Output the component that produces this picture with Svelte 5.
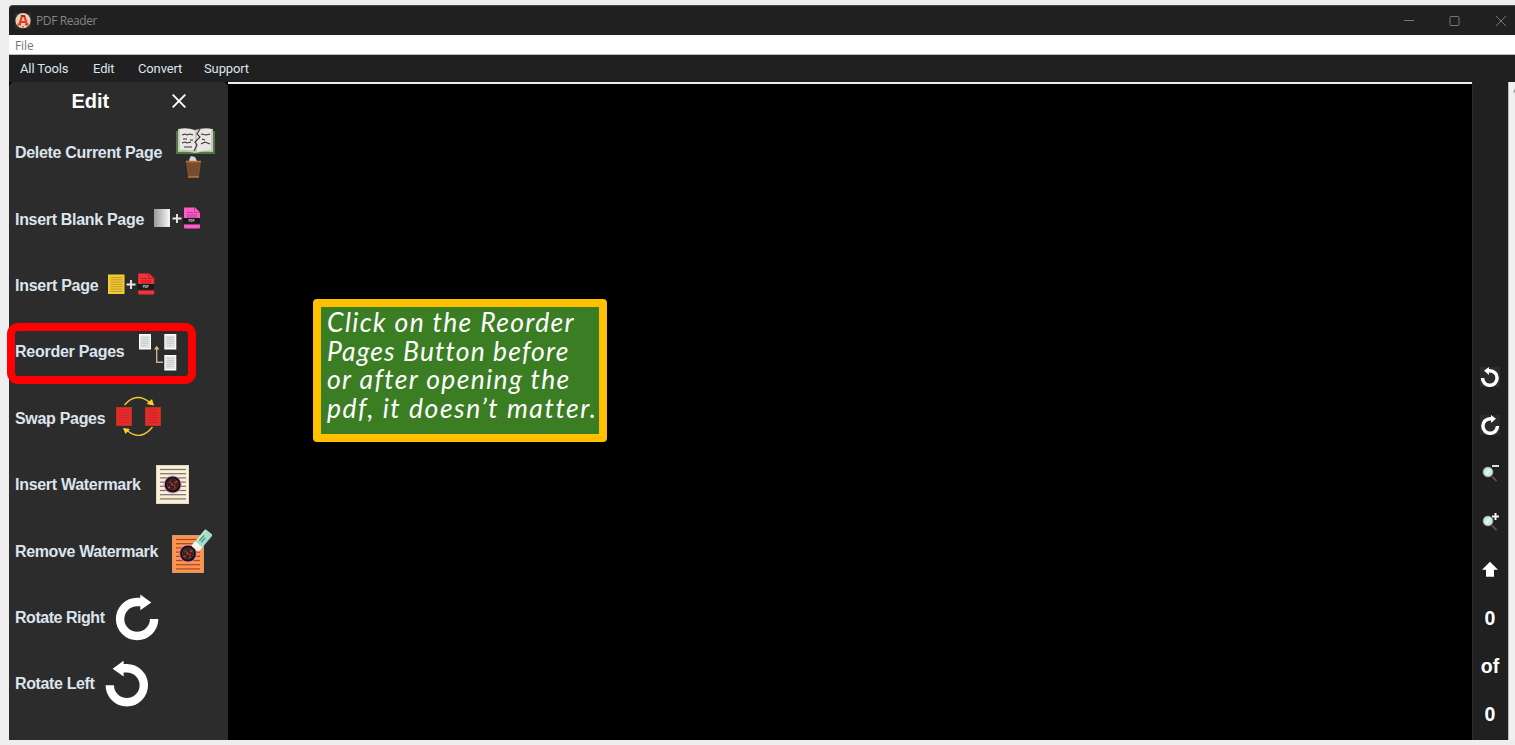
<script>
  const menus = [
    { name: 'All Tools', width: 73 },
    { name: 'Edit', width: 45 },
    { name: 'Convert', width: 66 },
    { name: 'Support', width: 60 }
  ];
  const tools = [
    { name: 'Delete Current Page', icon: 'delete', start: 155, width: 147 },
    { name: 'Insert Blank Page', icon: 'blank', start: 137, width: 129 },
    { name: 'Insert Page', icon: 'insert', start: 91, width: 83.3 },
    { name: 'Reorder Pages', icon: 'reorder', start: 121, width: 109.5 },
    { name: 'Swap Pages', icon: 'swap', start: 98, width: 90.3 },
    { name: 'Insert Watermark', icon: 'watermark', start: 135, width: 125.5 },
    { name: 'Remove Watermark', icon: 'erase', start: 150, width: 143 },
    { name: 'Rotate Right', icon: 'right', start: 94, width: 89.5 },
    { name: 'Rotate Left', icon: 'left', start: 84, width: 79.5 }
  ];
  const note = ['Click on the Reorder', 'Pages Button before', 'or after opening the', 'pdf, it doesn’t matter.'];
  const ruled = [0, 1, 2, 3, 4, 5, 6, 7];
  const widths = [248, 241, 243, 269];

  // Spaces the letters so that the text takes its set width.
  function fit(node, width) {
    const natural = node.getBoundingClientRect().width;
    node.style.letterSpacing = (width - natural) / node.textContent.length + 'px';
  }
</script>

{#snippet pdf(color, dark)}
  <path d="M2 0h11l5 5v6H2z" fill={color} />
  <path d="M12.5 0v5H18" fill={color} stroke={dark} stroke-width="1" />
  <path d="M5 5h6M5 7.5h10M5 9.5h10" stroke={dark} stroke-width="1" />
  <rect x="1" y="10.5" width="17" height="5.5" rx="1" fill="#1c1a1c" />
  <text x="9.5" y="14.4" text-anchor="middle" font-size="3" font-weight="700" fill="#ddd">PDF</text>
  <path d="M2 17h16v3q0 1-1 1H3q-1 0-1-1z" fill={color} />
{/snippet}

{#snippet sheet(x, y)}
  <g transform="translate({x} {y})">
    <rect width="12" height="15.5" fill="#fff" />
    <rect x="1" y="1.5" width="10" height="12.5" fill="#e2e2e2" />
    <path d="M3 3.5h6M2.5 5.5h7M2.5 7.5h7M2.5 9.5h7M2.5 11.5h5" stroke="#ccc" stroke-width="1" />
  </g>
{/snippet}

{#snippet seal(x, y)}
  <g transform="translate({x} {y})">
    <circle r="9.2" fill="#e874d2" opacity=".65" />
    <circle r="8" fill="#171013" />
    <circle r="5.6" fill="#38201f" stroke="#4e3535" stroke-width="1" />
    <path d="M-4.5 3.5l2-1M-1 1l.6-2.5M2-1.5l2.5-2M1 1.5l1.5-1" stroke="#d6392e" stroke-width="1.5" />
    <path d="M-3.5-1.5l2-1.5M1 4l2-1" stroke="#75666a" stroke-width="1" />
  </g>
{/snippet}

{#snippet lens()}
  <path d="M10 11l7 7.5" stroke="#38251e" stroke-width="2.4" />
  <path d="M12 13.5l4.5 4.5" stroke="#765039" stroke-width="1.7" />
  <circle cx="8" cy="9" r="4.8" fill="#cce8e5" stroke="#9db5b3" stroke-width="1" />
  <path d="M6 11.5l4-5" stroke="#effafa" stroke-width="1.6" />
{/snippet}

<div class="desktop">
  <div class="window">
    <header class="titlebar">
      <svg class="logo" width="16" height="16" viewBox="0 0 16 16">
        <rect width="16" height="16" fill="#302d2b" />
        <circle cx="8" cy="7.7" r="7.6" fill="#e4d3b4" />
        <path d="M2.5 11.5H6M10 11.5h3.5M4.5 11.5L7 3h2.3L12 11.5M5.5 9h5" fill="none" stroke="#ec3a20" stroke-width="2.2" />
        <path d="M6 2.5l4 1" stroke="#5b2b22" stroke-width="1.2" />
        <circle cx="8" cy="13.7" r="1" fill="#e4573c" />
      </svg>
      <span class="title">PDF Reader</span>
      <div class="controls">
        <svg width="106" height="30" viewBox="1400 5 106 30" fill="none" stroke="#777" stroke-width="1">
          <path d="M1404 19.5h10" />
          <rect x="1450" y="15.5" width="9" height="9" rx="1" />
          <path d="M1496 15l10 10M1506 15l-10 10" />
        </svg>
      </div>
    </header>
    <div class="filebar">File</div>
    <nav>
      {#each menus as m}
        <span style="width: {m.width}px">{m.name}</span>
      {/each}
    </nav>
    <div class="body">
      <aside>
        <div class="head">
          <h1>Edit</h1>
          <svg width="14" height="14" viewBox="0 0 14 14"><path d="M.7.7l12.6 12.6M13.3.7L.7 13.3" stroke="#fff" stroke-width="1.9" /></svg>
        </div>
        {#each tools as t}
          <div class="tool">
            <span class="label" style="width: {t.start}px"><span use:fit={t.width}>{t.name}</span></span>
            {#if t.icon === 'delete'}
              <svg width="48" height="66" viewBox="170 120 48 66">
                <path d="M176 131h39v23h-39z" fill="#4d7c39" />
                <path d="M178 129q10-2 17 1 8-3 18-1v23q-10-1-18 1-8-2-17-1z" fill="#c9c7c5" />
                <path d="M180 129q10-1 15 2v20q-8-2-15-1zM197 131q7-3 14-2v21q-8 0-14 2z" fill="#e9e7e4" />
                <path d="M200 129l-3 5 3 3-5 5 2 3-3 6M182 135l3-1 2 1 3-1 3 1M183 139h4M190 140h3M182 143l3-1 2 1 4-1M184 147h8M201 134l5 1 4-1M202 139l3 1M201 144l4-2 5 2" fill="none" stroke="#37302d" stroke-width="1.1" />
                <path d="M189 160l2-4 4 1 2 4-3 3-4-1z" fill="#d4d5d8" />
                <path d="M186 161h15l-2 16h-11z" fill="#7c502f" />
                <path d="M190 164l1 11M193.5 164v11M197 164l-1 11" stroke="#6b4529" stroke-width="1" />
                <path d="M186 161.5h15M188 177h11" stroke="#b97538" stroke-width="1.4" />
              </svg>
            {:else if t.icon === 'blank'}
              <svg width="54" height="66" viewBox="152 187 54 66">
                <defs><linearGradient id="paper"><stop stop-color="#999" /><stop offset="1" stop-color="#f8f8f8" /></linearGradient></defs>
                <rect x="154" y="209" width="16" height="18" fill="url(#paper)" />
                <path d="M172.5 218.5h9M177 214v9" stroke="#e9e9e9" stroke-width="1.9" />
                <g transform="translate(182 207.5)">{@render pdf('#ff5ac6', '#b74491')}</g>
              </svg>
            {:else if t.icon === 'insert'}
              <svg width="54" height="66" viewBox="106 253 54 66">
                <rect x="108" y="274.5" width="16.5" height="19.5" fill="#f4cb31" />
                {#each ruled.slice(0, 7) as n}<path d="M110.5 {277.5 + n * 2.3}h12" stroke="#b4962b" stroke-width=".9" />{/each}
                <path d="M126.5 284.5h9M131 280v9" stroke="#e9e9e9" stroke-width="1.9" />
                <g transform="translate(136.2 273.5)">{@render pdf('#fb2f36', '#ad252a')}</g>
              </svg>
            {:else if t.icon === 'reorder'}
              <svg width="44" height="66" viewBox="136 319 44 66">
                {@render sheet(139, 334)}{@render sheet(164.3, 334)}{@render sheet(164.3, 355)}
                <path d="M156.7 348v14.3h6.3" fill="none" stroke="#c5b095" stroke-width="1.4" />
                <path d="M154 349.5l2.7-3.8 2.7 3.8z" fill="#d8bd99" />
              </svg>
            {:else if t.icon === 'swap'}
              <svg width="54" height="66" viewBox="113 386 54 66">
                {#each [116, 145] as x}
                  <rect x={x + 0.5} y="407.5" width="15" height="18" fill="#ee292c" stroke="#b0381f" />
                  {#each ruled.slice(0, 6) as n}<path d="M{x + 3} {410 + n * 2.5}h10" stroke="#c02628" stroke-width=".9" />{/each}
                {/each}
                <path d="M124.5 405q12-14 26-2M152.5 427q-12 15-26 3" fill="none" stroke="#f2c72d" stroke-width="1.4" />
                <path d="M146.5 404l5.5-5 2 6.5zM123 428l7 1-4.5 5z" fill="#ffd327" />
              </svg>
            {:else if t.icon === 'watermark'}
              <svg width="42" height="66" viewBox="150 452 42 66">
                <rect x="156.5" y="465.5" width="32" height="38" fill="#fbefd8" stroke="#e3d8c3" />
                {#each ruled as n}<path d="M160 {469.5 + n * 4.2}h26" stroke="#75706b" stroke-width="1.2" />{/each}
                {@render seal(172.7, 484.5)}
              </svg>
            {:else if t.icon === 'erase'}
              <svg width="50" height="66" viewBox="165 519 50 66">
                <rect x="172.5" y="535.5" width="31" height="37" fill="#ff934d" stroke="#d7976e" />
                {#each ruled as n}<path d="M176 {539.5 + n * 4.2}h24" stroke="#a04b24" stroke-width="1.2" />{/each}
                {@render seal(188, 553.5)}
                <g transform="translate(192 545) rotate(-50)">
                  <rect width="21" height="9.5" rx="1.5" fill="#a4ddca" />
                  <rect x="-1" width="6" height="9.5" rx="1" fill="#f4f4ef" />
                  <path d="M8 3h7M8 5.5h6" stroke="#468e7b" stroke-width="1.2" />
                  <path d="M7 1h13" stroke="#c8f4e4" stroke-width="1" />
                </g>
              </svg>
            {:else}
              <svg width="58" height="66" viewBox="109 585 58 66">
                <g transform={t.icon === 'left' ? 'matrix(-1 0 0 1 273.6 .5)' : 'translate(.3 .3)'}>
                  <path d="M141 601.7h-4.2a17 17 0 1 0 17 17" fill="none" stroke="#fff" stroke-width="8.4" />
                  <path d="M140 594.2l11 8-11 7.8z" fill="#fff" />
                </g>
              </svg>
            {/if}
          </div>
        {/each}
      </aside>
      <main>
        <div class="note">
          {#each note as line, i}
            <div><span use:fit={widths[i]}>{line}</span></div>
          {/each}
        </div>
      </main>
      <div class="rail">
        {#each ['left', 'right'] as side}
          <div class="cell">
            <svg width="20" height="20" viewBox="0 0 20 20">
              <rect width="20" height="20" fill="#2b2b2b" />
              <g transform={side === 'left' ? '' : 'matrix(-1 0 0 1 20 0)'}>
                <path d="M2.5 11a7.3 7.3 0 1 0 7.3-7.3H8.5" fill="none" stroke="#fff" stroke-width="3.5" />
                <path d="M9 0v8L4 3.8z" fill="#fff" />
              </g>
            </svg>
          </div>
        {/each}
        <div class="cell"><svg class="zoom" width="20" height="20" viewBox="0 0 20 20">{@render lens()}<path d="M12 3h7" stroke="#dedede" stroke-width="2" /></svg></div>
        <div class="cell"><svg class="zoom" width="20" height="20" viewBox="0 0 20 20">{@render lens()}<path d="M12 4.5h7M15.5 1v7" stroke="#f4f4f4" stroke-width="2" /></svg></div>
        <div class="cell"><svg width="16" height="18" viewBox="0 0 16 18"><path d="M8 .8l8 8h-4v7H4v-7H0z" fill="#fff" /></svg></div>
        <div class="cell">0</div>
        <div class="cell">of</div>
        <div class="cell">0</div>
      </div>
      <div class="scroll"><svg width="6" height="12" viewBox="0 0 6 12"><path d="M4 10.5h2V6.5z" fill="#999" /></svg></div>
    </div>
  </div>
  <div class="marker"></div>
</div>

<style>
  :global(body) { margin: 0; overflow: hidden; }
  * { box-sizing: border-box; }
  svg { display: block; flex: none; }
  .desktop { position: relative; width: 1515px; height: 745px; padding: 5px 0 5px 9px; background: #eee; font-family: "Liberation Sans", Arial, sans-serif; }
  .window { display: flex; flex-direction: column; height: 735px; }
  .titlebar { display: flex; align-items: center; height: 30px; padding-left: 6px; background: #202020; border-top: 1px solid #454545; border-radius: 4px 0 0; }
  .logo { border-radius: 1px; }
  .title { margin-left: 5px; color: #858585; font: 12px "Open Sans", sans-serif; letter-spacing: -.4px; }
  .controls { margin-left: auto; padding-right: 9px; }
  .filebar { height: 20px; padding-left: 6px; border-bottom: 1px solid #bbb; background: #fff; color: #777; font: 12px/21px "Open Sans", sans-serif; letter-spacing: -.1px; }
  nav { display: flex; height: 27px; padding-left: 11px; background: #202020; color: #dce4ee; font: 13px/27px Roboto, sans-serif; letter-spacing: -.13px; }
  .body { display: flex; height: 658px; background: #000; }
  aside { width: 219px; background: #2c2c2c; border-radius: 5px 5px 0 0; }
  .head { display: flex; align-items: center; height: 38px; padding-left: 62.5px; color: #fff; }
  h1 { width: 100px; margin: 0; font-size: 20px; line-height: 36px; }
  .tool { display: flex; align-items: center; height: 66.4px; padding-left: 6px; }
  .label { flex: none; color: #dce4ee; font-size: 16px; font-weight: 700; white-space: nowrap; }
  main { width: 1244px; padding: 215px 0 0 85px; border-top: 2px solid #eee; background: #000; }
  .note { width: 294px; height: 143px; border: 8px solid #ffc000; border-radius: 4px; padding: 1px 0 0 6px; background: #3b7d23; color: #fff; font: italic 26.5px/28.5px "Segoe Print", "Lato", cursive; white-space: nowrap; }
  .rail { width: 36px; padding: 271px 1px 0 0; border-left: 1px solid #2b2b2b; background: #202020; }
  .cell { display: flex; align-items: center; justify-content: center; height: 48.2px; color: #fff; font-size: 19.5px; font-weight: 700; }
  .scroll { width: 7px; border-left: 1px solid #bbb; background: #f0f0f0; }
  .marker { position: absolute; left: 7px; top: 323px; width: 189px; height: 61px; border: 8px solid red; border-radius: 11px; }
</style>
